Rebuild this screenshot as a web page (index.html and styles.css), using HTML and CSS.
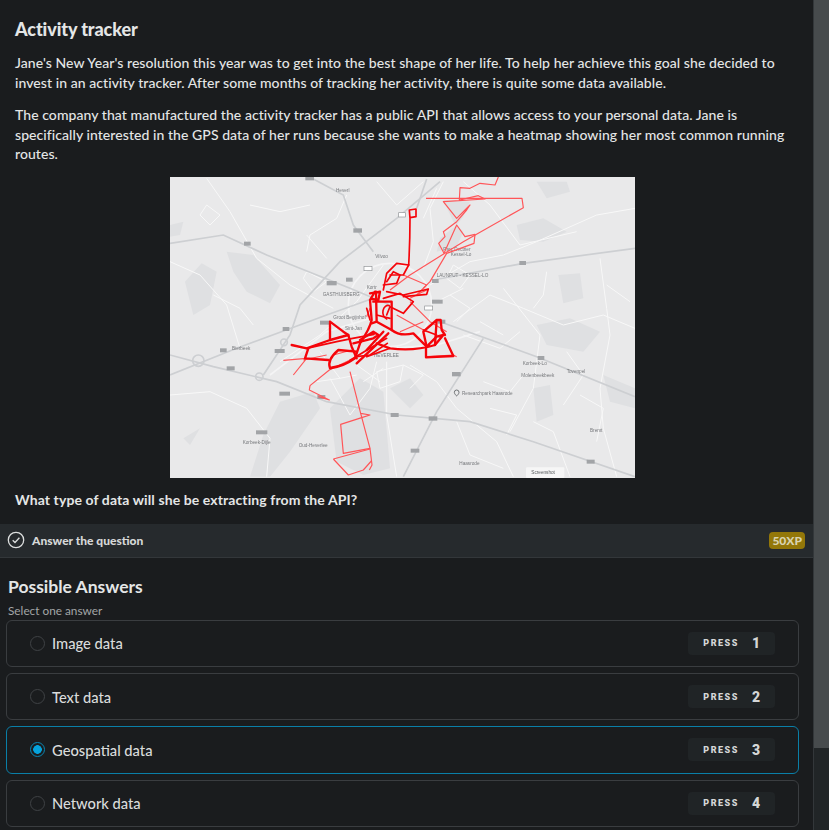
FILE: index.html
```html
<!DOCTYPE html>
<html lang="en">

<head>
    <meta charset="UTF-8" />
    <title>Activity tracker</title>
    <link rel="stylesheet" href="styles.css">
</head>

<body>
    <div class="page">
        <main class="content">
            <section class="context">
                <h1>Activity tracker</h1>
                <p>Jane's New Year's resolution this year was to get into the best shape of her life. To help her achieve this goal she decided to invest in an activity tracker. After some months of tracking her activity, there is quite some data available.</p>
                <p>The company that manufactured the activity tracker has a public API that allows access to your personal data. Jane is specifically interested in the GPS data of her runs because she wants to make a heatmap showing her most common running routes.</p>

                <svg class="map" viewBox="0 6 1395 903" preserveAspectRatio="none">
                    <rect x="0" y="6" width="1395" height="903" fill="#e9e9ea" />

                    <!-- green areas -->
                    <g fill="#dfe0e2">
                        <path d="M45 320 L95 265 L140 290 L120 390 L70 420 Z" />
                        <path d="M170 230 L250 240 L330 330 L300 385 L230 350 L190 290 Z" />
                        <path d="M820 75 L900 80 L880 125 L860 150 L810 190 L800 230 L860 215 L880 170 L850 140 Z" />
                        <path d="M1040 150 L1120 130 L1190 170 L1120 200 L1050 195 Z" />
                        <path d="M1100 20 L1190 20 L1200 50 L1130 70 Z" />
                        <path d="M1165 300 L1230 295 L1240 370 L1180 385 Z" />
                        <path d="M1100 450 L1200 430 L1290 470 L1240 530 L1130 510 Z" />
                        <path d="M660 640 L720 610 L760 660 L720 700 Z" />
                        <path d="M480 700 L570 610 L640 650 L660 880 L580 900 L500 860 Z" />
                        <path d="M330 680 L430 650 L450 700 L360 830 L300 905 L240 905 L280 780 Z" />
                        <path d="M1090 640 L1140 630 L1150 720 L1100 740 Z" />
                        <path d="M1300 600 L1395 640 L1395 700 L1320 680 Z" />
                        <path d="M0 150 L40 140 L30 180 L0 185 Z" />
                        <path d="M40 790 L90 760 L60 810 Z" />
                    </g>

                    <!-- small streets -->
                    <g fill="none" stroke="#f8f8f8" stroke-width="3">
                        <path d="M110 10 L180 110 L260 250 L360 330 L490 400" />
                        <path d="M0 660 L120 650 L230 700 L300 790 L290 905" />
                        <path d="M640 270 L560 380 L450 480 L330 560" />
                        <path d="M650 560 L650 720 L680 905" />
                        <path d="M780 330 L900 260 L1000 240 L1100 200 L1280 120 L1395 100" />
                        <path d="M850 440 L960 360 L1060 400 L1180 450 L1300 420 L1395 460" />
                        <path d="M720 570 L800 620 L860 700 L980 800 L1030 905" />
                        <path d="M1000 340 L1110 480 L1090 640 L1020 770" />
                        <path d="M1290 250 L1310 400 L1320 480 L1290 640 L1300 760 L1340 905" />
                        <path d="M620 20 L680 90 L760 20" />
                        <path d="M0 260 L90 300 L170 390 L210 520" />
                        <path d="M880 20 L960 90 L1050 210 L1220 170" />
                        <path d="M620 560 L600 640 L540 720 L480 610" />
                        <path d="M1090 740 L1150 770 L1200 905" />
                        <path d="M860 740 L900 840 L1000 880" />
                        <path d="M110 90 L150 120 L120 150 L90 120 Z" />
                        <path d="M410 290 L470 320 L430 350 L400 310 Z" />
                        <path d="M850 270 L900 300 L870 340 L830 310 Z" />
                        <path d="M840 360 L900 400 L860 440 M800 380 L880 340" />
                        <path d="M620 590 L700 570 L690 620 L630 640 L620 590 M700 570 L760 600 L720 640" />
                        <path d="M560 570 L630 620 M580 620 L640 580" />
                        <path d="M880 480 L990 520 L1050 470 M930 440 L1000 480" />
                        <path d="M450 530 L510 610 L440 620 M510 610 L560 600" />
                        <path d="M130 360 L210 400 L250 450 M240 90 L330 110 L420 90" />
                        <path d="M530 60 L500 130 L420 180 L410 230 M410 180 L470 250" />
                        <path d="M1190 530 L1240 600 L1180 690 M1230 660 L1300 700 L1280 800" />
                        <path d="M940 620 L1020 650 L1060 600 M960 700 L1040 720 L1010 780" />
                        <path d="M1130 290 L1120 360 L1090 400 M1310 330 L1380 380" />
                        <path d="M760 130 L800 40 M820 20 L780 100 L790 200 L760 280" />
                    </g>
                    <g fill="none" stroke="#f4f4f5" stroke-width="5">
                        <circle cx="660" cy="390" r="125" />
                        <path d="M300 600 L470 470 L600 430" />
                        <path d="M660 520 L800 510 L930 470" />
                    </g>

                    <!-- highways -->
                    <g fill="none" stroke="#cdcfd2" stroke-width="5">
                        <path d="M0 205 L160 180 L290 240 L540 340 L660 390" />
                        <path d="M0 540 L130 575 L320 620 L470 680 L680 720 L900 740 L1090 800 L1395 905" />
                        <path d="M0 600 L200 520 L470 420 L610 370" />
                        <path d="M280 600 L360 480 L390 390 L510 260 L680 130 L810 20" />
                        <path d="M790 315 L1060 265 L1395 220" />
                        <path d="M810 440 L1100 545 L1395 665" />
                        <path d="M430 12 L520 60 L550 150 L610 230" />
                        <path d="M700 905 L800 710 L940 490" />
                        <path d="M770 12 L740 100" />
                        <circle cx="85" cy="557" r="17" />
                        <circle cx="268" cy="605" r="11" />
                        <circle cx="342" cy="502" r="10" />
                    </g>

                    <!-- road shields -->
                    <g fill="#a2a4a7">
                        <rect x="406" y="6" width="26" height="10" />
                        <rect x="222" y="200" width="20" height="12" />
                        <rect x="550" y="160" width="26" height="13" />
                        <rect x="528" y="308" width="20" height="12" />
                        <rect x="470" y="318" width="30" height="13" />
                        <rect x="1048" y="258" width="20" height="12" />
                        <rect x="786" y="312" width="20" height="12" />
                        <rect x="786" y="374" width="32" height="12" />
                        <rect x="338" y="456" width="20" height="12" />
                        <rect x="150" y="520" width="20" height="12" />
                        <rect x="314" y="522" width="30" height="12" />
                        <rect x="170" y="574" width="24" height="12" />
                        <rect x="328" y="650" width="32" height="12" />
                        <rect x="442" y="660" width="24" height="12" />
                        <rect x="662" y="714" width="24" height="12" />
                        <rect x="776" y="724" width="26" height="13" />
                        <rect x="846" y="591" width="26" height="13" />
                        <rect x="1103" y="543" width="20" height="12" />
                        <rect x="258" y="766" width="34" height="12" />
                        <rect x="722" y="821" width="26" height="12" />
                        <rect x="1250" y="854" width="24" height="12" />
                        <rect x="804" y="434" width="22" height="12" />
                        <rect x="450" y="437" width="28" height="12" />
                    </g>
                    <g fill="#fff" stroke="#8f9295" stroke-width="2">
                        <rect x="686" y="113" width="20" height="13" />
                        <rect x="582" y="274" width="24" height="13" />
                        <rect x="764" y="393" width="24" height="12" />
                    </g>

                    <!-- place labels -->
                    <g class="map-label">
                        <text x="498" y="50">Heverl</text>
                        <text x="616" y="249">Vilvoo</text>
                        <text x="820" y="228">Parc Dectrier</text>
                        <text x="842" y="242">Kessel-Lo</text>
                        <text x="800" y="306">LAUNPUT - KESSEL-LO</text>
                        <text x="458" y="363">GASTHUISBERG</text>
                        <text x="590" y="342">Kortr</text>
                        <text x="490" y="433">Groot Begijnhof</text>
                        <text x="525" y="465">Sint-Jan</text>
                        <text x="186" y="526">Bierbeek</text>
                        <text x="612" y="546">HEVERLEE</text>
                        <text x="876" y="661">Researchpark Haasrode</text>
                        <text x="1058" y="571">Korbeek-Lo</text>
                        <text x="1190" y="593">Tovenpel</text>
                        <text x="1054" y="607">Molenbeekbeek</text>
                        <text x="1260" y="771">Bremt</text>
                        <text x="218" y="806">Korbeek-Dijle</text>
                        <text x="386" y="816">Oud-Heverlee</text>
                        <text x="868" y="869">Haasrode</text>
                    </g>
                    <path d="M860 645 a7 7 0 0 1 7 7 c0 5 -7 11 -7 11 c0 0 -7 -6 -7 -11 a7 7 0 0 1 7 -7 Z" fill="none" stroke="#6f7275" stroke-width="3" />

                    <!-- thin routes -->
                    <g fill="none" stroke="#ff5558" stroke-width="3.5" stroke-linejoin="round">
                        <path d="M768 70 L1056 70 L1060 98 L880 200 L720 300 L660 345" />
                        <path d="M985 6 L975 30 L930 25 L900 40 L870 38 L868 75 L925 62 L945 72 L820 80 L860 130 L900 90 L890 105 L860 140 L820 170 L825 185 L806 205 L822 235 L860 150 L885 185 L915 178 L912 205 L830 235 L780 320 L760 340" />
                        <path d="M540 590 L572 715 L600 720 L575 728 L512 748 L520 835 L600 820 L606 870 L598 885" />
                        <path d="M572 715 L600 820 M490 852 L600 822 M490 852 L535 900 L580 885 L604 858" />
                        <path d="M420 632 L478 585 L540 555 M420 632 L418 645 L478 675 L445 665" />
                        <path d="M370 600 L410 550 L340 556 M400 555 L470 540" />
                        <path d="M770 545 L850 540 L860 545 M720 380 L780 440 L830 470 M690 470 L760 440" />
                        <path d="M760 350 L775 342 L720 370 M700 300 L770 330 L740 360" />
                        <path d="M490 540 L545 525 M600 400 L590 425 M680 420 L770 470" />
                    </g>

                    <!-- thick routes -->
                    <g fill="none" stroke="#f5040a" stroke-width="5" stroke-linejoin="round" stroke-linecap="round">
                        <path d="M716 270 Q720 200 720 130 L718 105 L738 102 L738 125 L720 128" />
                        <path d="M716 270 L680 265 L650 295 L640 345" />
                        <path d="M640 330 L680 325 L690 300 L670 290 L650 320" />
                        <path d="M650 350 L700 360 L775 342 L770 358 L700 365" />
                        <path d="M640 370 L690 355 L730 380 L700 415 L680 405 L660 395 L650 420" />
                        <path d="M660 300 L700 300 L716 270" />
                        <path d="M590 400 L600 435 M620 420 L660 430" />
                        <path d="M650 432 a15 20 0 0 1 8 -40" />
                        <path d="M410 520 L500 500 L548 490 L612 478" />
                        <path d="M480 578 Q530 570 560 545 L600 540 L652 505" />
                        <path d="M540 556 L650 490" />
                        <path d="M660 520 L590 545 M760 465 L800 480" />
                    </g>
                    <g fill="none" stroke="#f5040a" stroke-width="7" stroke-linejoin="round" stroke-linecap="round">
                        <path d="M615 350 L600 375 L605 435 Q600 460 570 505 L555 550 Q520 575 480 580 Q470 555 505 525 L560 530" />
                        <path d="M365 510 L410 520 L480 495 L535 480 L545 515 L560 550" />
                        <path d="M480 440 L480 495 M480 440 L520 470 L535 480" />
                        <path d="M415 520 L405 550 L475 555" />
                        <path d="M610 380 L665 380 L665 465 L620 440 L605 445" />
                        <path d="M665 465 Q690 485 730 475 L770 515 L800 485 L820 480 L795 510 Q730 530 660 520 L620 505" />
                        <path d="M655 475 L560 565 M640 470 L590 525" />
                        <path d="M770 515 L760 470 L800 435 L812 435 L815 465 L825 480 M800 435 L795 510" />
                        <path d="M768 547 L850 543 L825 490 M768 547 L768 520" />
                        <path d="M550 505 L610 490 L625 480 L610 470 L570 495" />
                        <path d="M600 355 L630 350 L625 375 L605 372" />
                        <path d="M618 350 L620 440" />
                    </g>
                    <rect x="1068" y="877" width="115" height="32" rx="3" fill="#f6f6f6" />
                    <text class="map-badge" x="1084" y="896">Screenshot</text>
                </svg>

                <p class="question">What type of data will she be extracting from the API?</p>
            </section>

            <div class="task-bar">
                <div class="task-title">
                    <svg class="check" viewBox="0 0 18 18">
                        <circle cx="9" cy="9" r="7.7" />
                        <path d="M5.7 9.2 L8 11.5 L12.4 6.8" />
                    </svg>
                    <span>Answer the question</span>
                </div>
                <span class="xp">50XP</span>
            </div>

            <section class="answers">
                <h2>Possible Answers</h2>
                <div class="hint">Select one answer</div>
                <div class="answer-list">
                    <div class="answer">
                        <span class="radio"></span>
                        <span class="answer-text">Image data</span>
                        <span class="press"><b>PRESS</b><i>1</i></span>
                    </div>
                    <div class="answer">
                        <span class="radio"></span>
                        <span class="answer-text">Text data</span>
                        <span class="press"><b>PRESS</b><i>2</i></span>
                    </div>
                    <div class="answer selected">
                        <span class="radio"></span>
                        <span class="answer-text">Geospatial data</span>
                        <span class="press"><b>PRESS</b><i>3</i></span>
                    </div>
                    <div class="answer">
                        <span class="radio"></span>
                        <span class="answer-text">Network data</span>
                        <span class="press"><b>PRESS</b><i>4</i></span>
                    </div>
                </div>
            </section>
        </main>

        <div class="scrollbar">
            <div class="scroll-thumb"></div>
        </div>
    </div>
</body>

</html>
```

FILE: styles.css
```css
body {
    margin: 0;
    background: #1a1c1e;
    color: #e4e6e6;
    font-family: 'Lato', 'Liberation Sans', sans-serif;
}

.page {
    display: flex;
    height: 830px;
    overflow: hidden;
}

.content {
    flex: 1;
    min-width: 0;
}

.context {
    padding: 18px 23px 0 15px;
}

h1 {
    margin: 0 0 12px;
    font-size: 18px;
    line-height: 23px;
    font-weight: 900;
    letter-spacing: -0.1px;
}

.context p {
    margin: 0 0 13px;
    font-size: 14px;
    line-height: 19.6px;
    font-weight: 500;
    letter-spacing: 0.065px;
}

.map {
    display: block;
    width: 465px;
    height: 301px;
    margin: 0 auto 12px;
    background: #e9e9ea;
    filter: blur(0.4px);
}

.map-label {
    font-family: 'Liberation Sans', sans-serif;
    font-size: 14px;
    fill: #77797c;
}

.map-badge {
    font-family: 'Liberation Sans', sans-serif;
    font-size: 14px;
    fill: #55585b;
}

.context .question {
    margin: 0 0 14px;
    font-weight: 700;
    letter-spacing: 0.1px;
}

.task-bar {
    display: flex;
    align-items: center;
    justify-content: space-between;
    height: 33px;
    padding: 0 8px 0 7px;
    background: #262a2d;
    border-bottom: 1px solid #33373a;
}

.task-title {
    display: flex;
    align-items: center;
    gap: 7px;
    font-size: 12px;
    font-weight: 900;
    color: #d6d8d8;
}

.check {
    width: 18px;
    height: 18px;
}

.check circle,
.check path {
    fill: none;
    stroke: #dcdede;
    stroke-width: 1.3;
}

.xp {
    padding: 1px 3px;
    border-radius: 4px;
    background: #937709;
    color: #d9d3b0;
    font-size: 12px;
    line-height: 15px;
    font-weight: 900;
}

.answers {
    padding: 18px 14px 0 6px;
}

h2 {
    margin: 0 0 7px 2px;
    font-size: 17.5px;
    line-height: 21px;
    font-weight: 700;
}

.hint {
    margin: 0 0 2px 2px;
    font-size: 11.8px;
    line-height: 14px;
    color: #a3a6a7;
}

.answer-list {
    display: flex;
    flex-direction: column;
    gap: 6px;
}

.answer {
    display: flex;
    align-items: center;
    height: 45.33px;
    padding: 0 23px 0 23px;
    border: 1px solid #3a3d40;
    border-radius: 6px;
}

.answer.selected {
    border-color: #0a7fa8;
}

.radio {
    box-sizing: border-box;
    width: 15px;
    height: 15px;
    margin-right: 7px;
    border: 1px solid #3f4245;
    border-radius: 50%;
}

.selected .radio {
    border-color: #0a86b3;
    background: radial-gradient(circle, #05a3dc 0 4px, transparent 4.6px);
}

.answer-text {
    flex: 1;
    font-size: 14.7px;
    font-weight: 500;
    color: #d9dbdb;
}

.press {
    display: flex;
    align-items: center;
    justify-content: flex-end;
    gap: 13px;
    box-sizing: border-box;
    width: 87px;
    height: 23px;
    padding-right: 15px;
    border-radius: 4px;
    background: #202426;
}

.press b {
    font-family: 'Roboto', sans-serif;
    font-size: 9px;
    letter-spacing: 1.5px;
    font-weight: 900;
    color: #d4d6d6;
}

.press i {
    font-style: normal;
    font-family: 'Roboto', sans-serif;
    font-size: 14px;
    font-weight: 900;
    color: #d4d6d6;
}

.scrollbar {
    flex: none;
    width: 16px;
    box-sizing: border-box;
    border-left: 1px solid #33373a;
    background: #212527;
}

.scroll-thumb {
    height: 748px;
    background: #474b4d;
}
```
